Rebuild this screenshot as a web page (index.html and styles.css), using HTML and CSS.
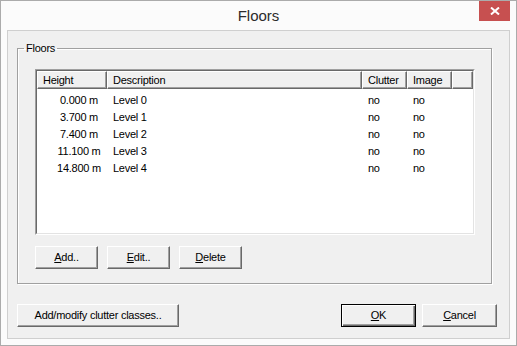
FILE: index.html
```html
<!DOCTYPE html>
<html lang="en">
<head>
    <meta charset="UTF-8">
    <meta name="viewport" content="width=device-width, initial-scale=1.0">
    <title>Floors</title>
    <link rel="stylesheet" href="styles.css">
</head>
<body>
    <div class="window">
        <div class="titlebar">
            <span></span>
            <div class="title">Floors</div>
            <button class="close-btn" title="Close">
                <svg width="10" height="8" viewBox="0 0 10 8">
                    <path d="M1 0.5 L9 7.5 M9 0.5 L1 7.5" stroke="#fff" stroke-width="2" fill="none"/>
                </svg>
            </button>
        </div>

        <div class="client">
            <fieldset class="groupbox">
                <legend>Floors</legend>
                <div class="groupbox-body">
                    <div class="listview">
                        <div class="lv-inner">
                            <div class="lv-header">
                                <div class="lv-col">Height</div>
                                <div class="lv-col">Description</div>
                                <div class="lv-col">Clutter</div>
                                <div class="lv-col">Image</div>
                                <div class="lv-col"></div>
                            </div>
                            <div class="lv-rows">
                                <div class="lv-row"><span class="cell-height">0.000 m</span><span>Level 0</span><span>no</span><span>no</span></div>
                                <div class="lv-row"><span class="cell-height">3.700 m</span><span>Level 1</span><span>no</span><span>no</span></div>
                                <div class="lv-row"><span class="cell-height">7.400 m</span><span>Level 2</span><span>no</span><span>no</span></div>
                                <div class="lv-row"><span class="cell-height">11.100 m</span><span>Level 3</span><span>no</span><span>no</span></div>
                                <div class="lv-row"><span class="cell-height">14.800 m</span><span>Level 4</span><span>no</span><span>no</span></div>
                            </div>
                        </div>
                    </div>
                    <div class="btn-row">
                        <button class="btn"><u>A</u>dd..</button>
                        <button class="btn"><u>E</u>dit..</button>
                        <button class="btn"><u>D</u>elete</button>
                    </div>
                </div>
            </fieldset>

            <div class="footer">
                <button class="btn btn-wide">Add/modify clutter classes..</button>
                <div class="footer-right">
                    <button class="btn btn-dialog btn-default"><u>O</u>K</button>
                    <button class="btn btn-dialog"><u>C</u>ancel</button>
                </div>
            </div>
        </div>
    </div>
</body>
</html>
```

FILE: styles.css
```css
* {
    box-sizing: border-box;
}

body {
    margin: 0;
    font-family: "Liberation Sans", Arial, sans-serif;
    font-size: 11px;
    letter-spacing: -0.25px;
    color: #000;
    background: #fff;
}

.window {
    width: 517px;
    height: 346px;
    border: 1px solid #ababab;
    background: #fbfbfb;
    padding: 0 6px 6px;
    display: flex;
    flex-direction: column;
}

.titlebar {
    height: 29px;
    display: grid;
    grid-template-columns: 1fr auto 1fr;
}
.title {
    align-self: center;
    font-size: 15px;
    letter-spacing: 0;
    color: #2b2b2b;
}
.close-btn {
    justify-self: end;
    align-self: start;
    width: 31px;
    height: 20px;
    padding: 0;
    border: 0;
    background: #c75050;
    display: flex;
    align-items: center;
    justify-content: center;
}

.client {
    flex: 1;
    border: 1px solid #cfcfcf;
    background: #f0f0f0;
    padding: 11px 12px 10px 9px;
}

.groupbox {
    margin: 0;
    padding: 0;
    width: 475px;
    min-width: 0;
    border: 1px solid #a0a0a0;
    box-shadow: 1px 1px 0 #fff, inset 1px 1px 0 #fff;
}
.groupbox legend {
    margin-left: 6px;
    padding: 0 2px;
    line-height: 13px;
}
.groupbox-body {
    padding: 14px 16px 14px 17px;
}

/* list view */
.listview {
    width: 440px;
    height: 166px;
    border: 1px solid;
    border-color: #a0a0a0 #fff #fff #a0a0a0;
}
.lv-inner {
    height: 100%;
    border: 1px solid;
    border-color: #696969 #e3e3e3 #e3e3e3 #696969;
    background: #fff;
}
.lv-header,
.lv-row {
    display: grid;
    grid-template-columns: 70px 255px 45px 45px 1fr;
}
.lv-col {
    height: 18px;
    line-height: 16px;
    padding-left: 5px;
    background: #f0f0f0;
    border: 1px solid;
    border-color: #fff #696969 #696969 #fff;
    box-shadow: inset -1px -1px 0 #a0a0a0;
    white-space: nowrap;
}
.lv-rows {
    padding-top: 3px;
}
.lv-row {
    height: 17px;
    line-height: 17px;
}
.lv-row span {
    padding-left: 6px;
    white-space: nowrap;
}
.lv-row .cell-height {
    padding-left: 14px;
    text-align: center;
}

/* buttons */
.btn {
    height: 23px;
    width: 63px;
    padding: 0 0 1px;
    font-family: inherit;
    font-size: 11px;
    letter-spacing: -0.25px;
    color: #000;
    background: #f0f0f0;
    border: 1px solid;
    border-color: #fff #696969 #696969 #fff;
    box-shadow: inset -1px -1px 0 #a0a0a0;
}
.btn-row {
    display: flex;
    gap: 9px;
    margin-top: 11px;
}
.btn-wide {
    width: 162px;
}
.btn-dialog {
    width: 75px;
}
.btn-default {
    border-color: #000;
    box-shadow: inset 1px 1px 0 #fff, inset -1px -1px 0 #696969, inset -2px -2px 0 #a0a0a0;
}

.footer {
    margin-top: 20px;
    display: flex;
    justify-content: space-between;
}
.footer-right {
    display: flex;
    gap: 6px;
}
```
